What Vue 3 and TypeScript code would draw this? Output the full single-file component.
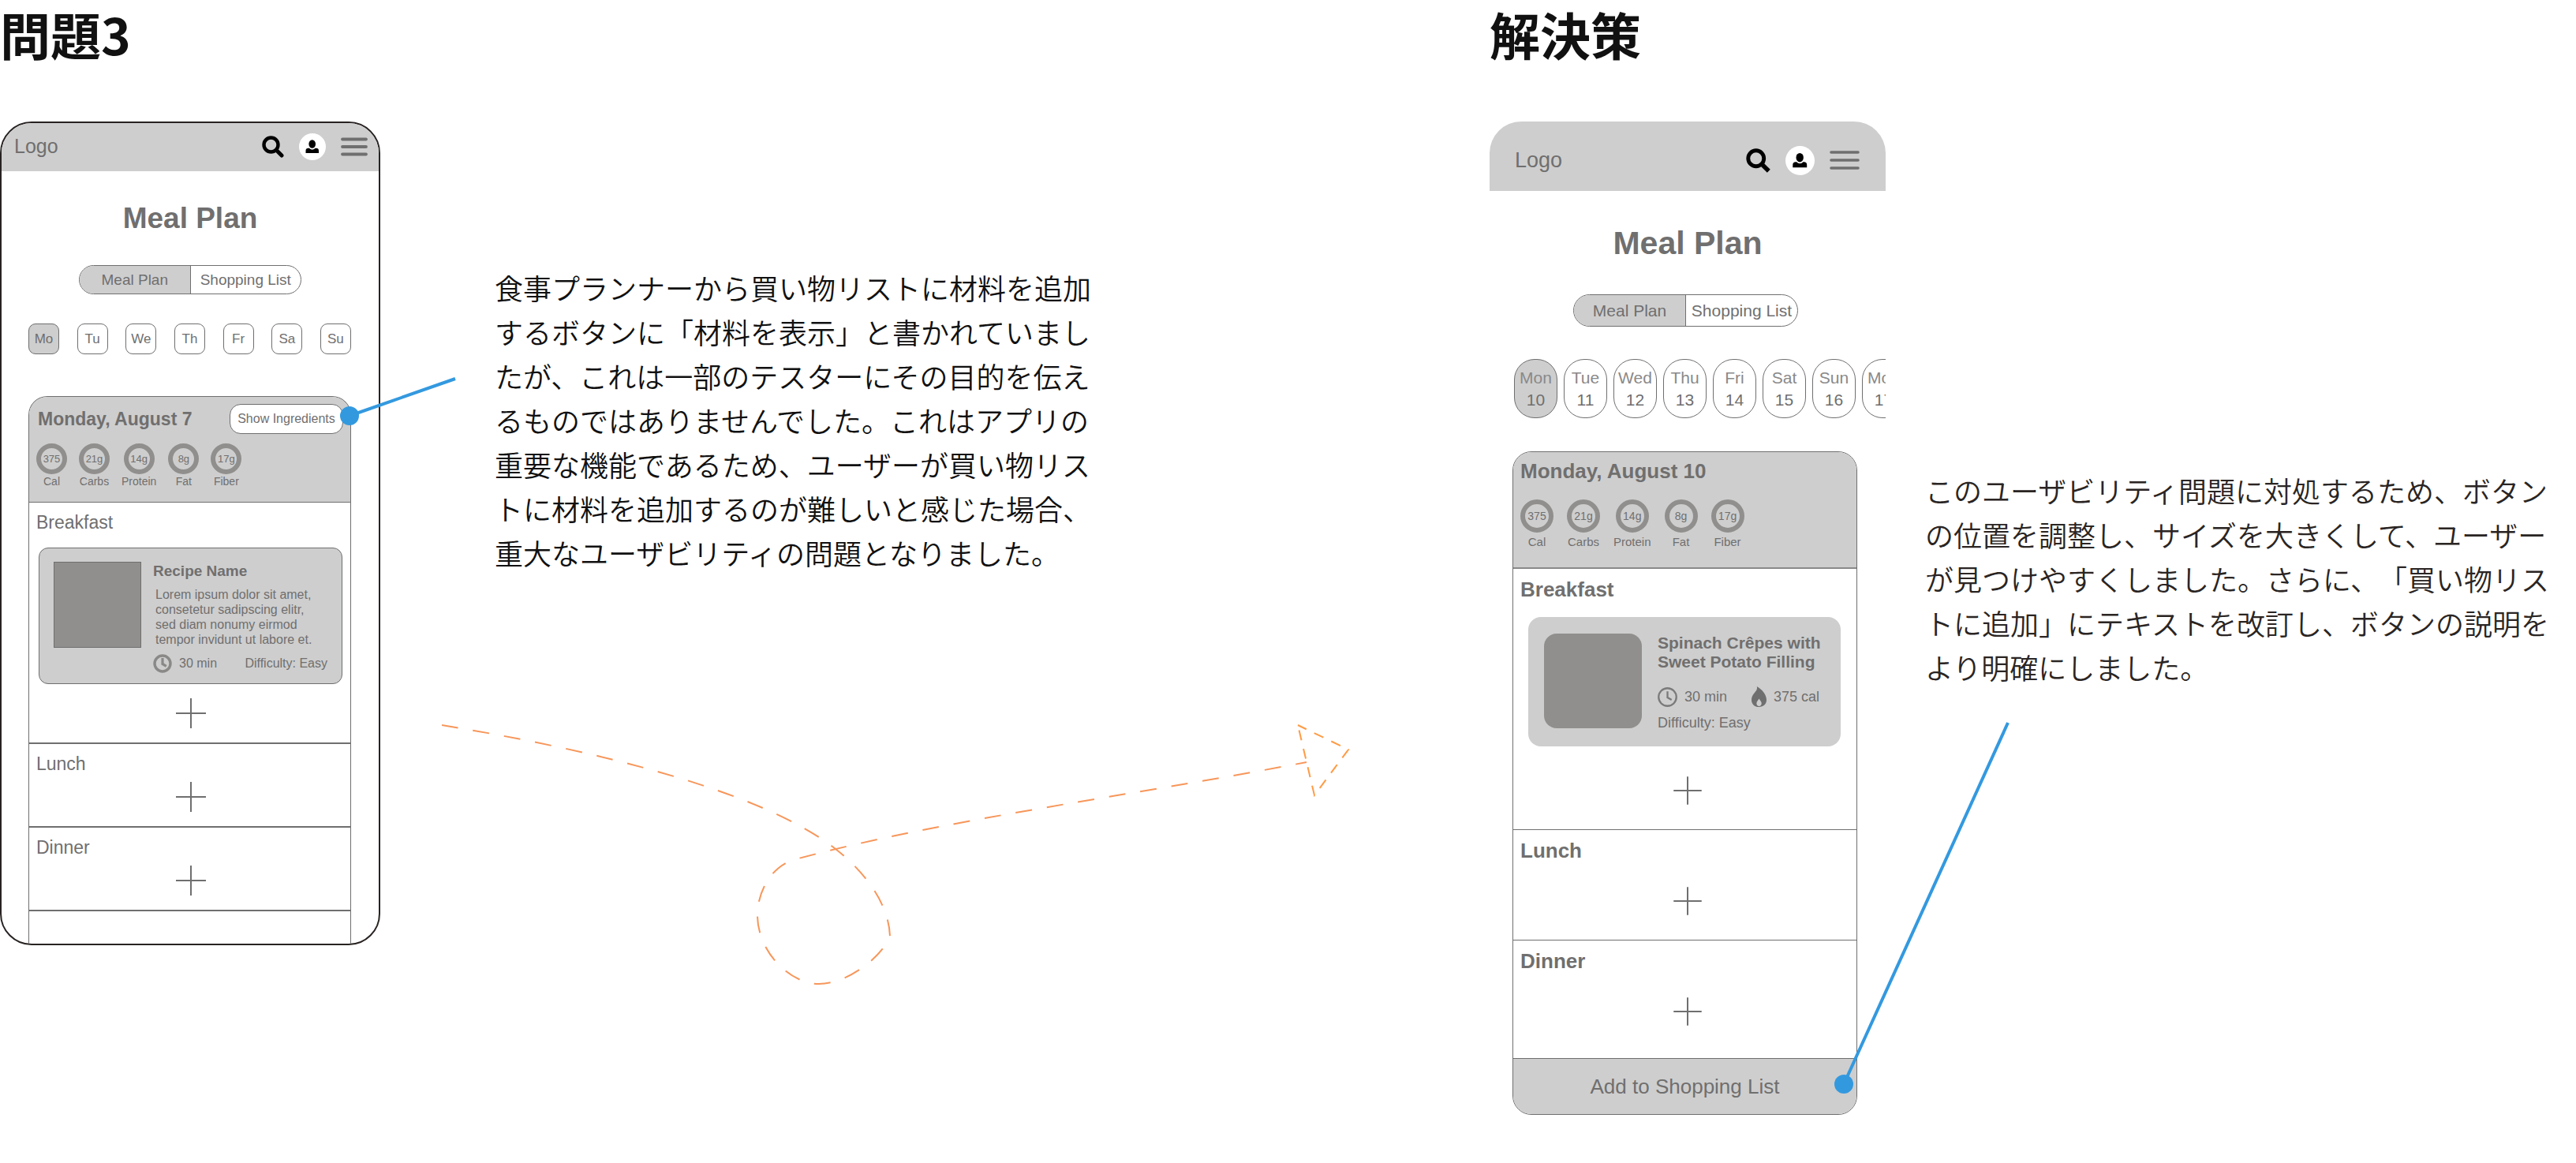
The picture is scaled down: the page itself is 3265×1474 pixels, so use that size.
<script setup lang="ts">
interface Nutrient {
  value: string
  label: string
}

interface Day {
  name: string
  date: number
}

const problemLines: string[] = [
  '食事プランナーから買い物リストに材料を追加',
  'するボタンに「材料を表示」と書かれていまし',
  'たが、これは一部のテスターにその目的を伝え',
  'るものではありませんでした。これはアプリの',
  '重要な機能であるため、ユーザーが買い物リス',
  'トに材料を追加するのが難しいと感じた場合、',
  '重大なユーザビリティの問題となりました。',
]

const solutionLines: string[] = [
  'このユーザビリティ問題に対処するため、ボタン',
  'の位置を調整し、サイズを大きくして、ユーザー',
  'が見つけやすくしました。さらに、「買い物リス',
  'トに追加」にテキストを改訂し、ボタンの説明を',
  'より明確にしました。',
]

const recipeLines: string[] = [
  'Lorem ipsum dolor sit amet,',
  'consetetur sadipscing elitr,',
  'sed diam nonumy eirmod',
  'tempor invidunt ut labore et.',
]

const weekdays: string[] = ['Mo', 'Tu', 'We', 'Th', 'Fr', 'Sa', 'Su']

const days: Day[] = [
  { name: 'Mon', date: 10 },
  { name: 'Tue', date: 11 },
  { name: 'Wed', date: 12 },
  { name: 'Thu', date: 13 },
  { name: 'Fri', date: 14 },
  { name: 'Sat', date: 15 },
  { name: 'Sun', date: 16 },
  { name: 'Mon', date: 17 },
]

const nutrients: Nutrient[] = [
  { value: '375', label: 'Cal' },
  { value: '21g', label: 'Carbs' },
  { value: '14g', label: 'Protein' },
  { value: '8g', label: 'Fat' },
  { value: '17g', label: 'Fiber' },
]
</script>

<template>
  <main class="page">
    <section class="column">
      <h2 class="heading">問題3</h2>
      <div class="stage">
        <div class="phone phone-before">
          <header class="bar">
            <span class="logo">Logo</span>
            <nav class="tools">
              <button class="tool tool-search" type="button" aria-label="Search">
                <svg viewBox="0 0 28 28"><circle cx="11.5" cy="11.5" r="9" fill="none" stroke="#000" stroke-width="4.4" /><path d="M18.5 18.5 25 25" stroke="#000" stroke-width="5" stroke-linecap="round" /></svg>
              </button>
              <button class="tool tool-user" type="button" aria-label="Account">
                <svg viewBox="0 0 34 34"><circle cx="17" cy="17" r="17" fill="#fff" /><ellipse cx="16.7" cy="13.5" rx="4.3" ry="5.3" /><path d="M8.5 25v-3c0-2.2 1.3-3.3 3.5-3.3h1c1 1.2 2.3 1.8 3.8 1.8s2.8-.6 3.800-1.800h1c2.200 0 3.400 1.100 3.400 3.300v3z" /></svg>
              </button>
              <button class="tool tool-menu" type="button" aria-label="Menu">
                <svg viewBox="0 0 34 24"><path d="M2 2.5h30M2 12h30M2 21.5h30" fill="none" stroke="#706f6f" stroke-width="3.8" stroke-linecap="round" /></svg>
              </button>
            </nav>
          </header>
          <h3 class="title">Meal Plan</h3>
          <div class="segments">
            <button class="segment active" type="button">Meal Plan</button>
            <button class="segment" type="button">Shopping List</button>
          </div>
          <div class="days">
            <button v-for="(day, i) in weekdays" :key="day" class="day" :class="{ active: i === 0 }" type="button">{{ day }}</button>
          </div>
          <article class="plan">
            <div class="summary">
              <div class="summary-row">
                <h4 class="date">Monday, August 7</h4>
                <button class="show" type="button">Show Ingredients</button>
              </div>
              <ul class="nutrients">
                <li v-for="n in nutrients" :key="n.label" class="nutrient">
                  <span class="ring">{{ n.value }}</span>
                  <span class="nutrient-label">{{ n.label }}</span>
                </li>
              </ul>
            </div>
            <div class="meal">
              <h5 class="meal-name">Breakfast</h5>
              <div class="recipe">
                <div class="photo"></div>
                <div class="info">
                  <h6 class="recipe-name">Recipe Name</h6>
                  <p class="description"><span v-for="line in recipeLines" :key="line" class="line">{{ line }}</span></p>
                  <div class="meta">
                    <span class="fact">
                      <svg class="clock" viewBox="0 0 24 24"><circle cx="12" cy="12" r="10" fill="none" stroke="#8a8988" stroke-width="3.4" /><path d="M12 5v7.5l4.8 2.8" fill="none" stroke="#8a8988" stroke-width="3.2" /></svg>
                      30 min
                    </span>
                    <span>Difficulty: Easy</span>
                  </div>
                </div>
              </div>
              <button class="add" type="button" aria-label="Add to breakfast"><svg viewBox="0 0 38 38"><path d="M19 0v38M0 19h38" stroke="#706f6f" stroke-width="2" /></svg></button>
            </div>
            <div v-for="meal in ['Lunch', 'Dinner']" :key="meal" class="meal">
              <h5 class="meal-name">{{ meal }}</h5>
              <button class="add" type="button" :aria-label="'Add to ' + meal"><svg viewBox="0 0 38 38"><path d="M19 0v38M0 19h38" stroke="#706f6f" stroke-width="2" /></svg></button>
            </div>
            <div class="meal-rest"></div>
          </article>
        </div>

        <svg class="pointer pointer-before" viewBox="0 0 148 64" aria-hidden="true">
          <path d="M12 50 146 3" stroke="#3399df" stroke-width="4" />
          <circle cx="12" cy="50" r="12" fill="#3399df" />
        </svg>

        <div class="side">
          <p class="note note-before"><span v-for="line in problemLines" :key="line" class="line">{{ line }}</span></p>
          <svg class="arrow" viewBox="560 910 1156 344" aria-hidden="true">
            <path d="M560 919C750 950 965 1002 1059 1076C1095 1104 1127 1145 1128 1187C1118 1212 1075 1247 1038 1247C1000 1247 960 1205 960 1160C960 1130 978 1095 1012 1088C1200 1038 1430 1009 1656 966" fill="none" stroke="#f7965a" stroke-width="2" stroke-dasharray="21 19" />
            <path d="M1645 919 1709 950 1666 1008Z" fill="none" stroke="#ff9b45" stroke-width="2" stroke-dasharray="13 11" stroke-dashoffset="1" />
          </svg>
        </div>
      </div>
    </section>

    <section class="column">
      <h2 class="heading">解決策</h2>
      <div class="stage">
        <div class="phone phone-after">
          <header class="bar">
            <span class="logo">Logo</span>
            <nav class="tools">
              <button class="tool tool-search" type="button" aria-label="Search">
                <svg viewBox="0 0 28 28"><circle cx="11.5" cy="11.5" r="9" fill="none" stroke="#000" stroke-width="4.4" /><path d="M18 18 26 26" stroke="#000" stroke-width="5" /></svg>
              </button>
              <button class="tool tool-user" type="button" aria-label="Account">
                <svg viewBox="0 0 34 34"><circle cx="17" cy="17" r="17" fill="#fff" /><ellipse cx="16.7" cy="13.5" rx="4.3" ry="5.3" /><path d="M8.5 25v-3c0-2.2 1.3-3.3 3.5-3.3h1c1 1.2 2.3 1.8 3.8 1.8s2.8-.6 3.800-1.800h1c2.200 0 3.400 1.100 3.400 3.300v3z" /></svg>
              </button>
              <button class="tool tool-menu" type="button" aria-label="Menu">
                <svg viewBox="0 0 38 24"><path d="M2 2h34M2 12h34M2 22h34" fill="none" stroke="#706f6f" stroke-width="3.6" stroke-linecap="round" /></svg>
              </button>
            </nav>
          </header>
          <h3 class="title">Meal Plan</h3>
          <div class="segments">
            <button class="segment active" type="button">Meal Plan</button>
            <button class="segment" type="button">Shopping List</button>
          </div>
          <div class="days">
            <button v-for="(day, i) in days" :key="day.date" class="day" :class="{ active: i === 0 }" type="button">
              <span class="day-name">{{ day.name }}</span>
              <span>{{ day.date }}</span>
            </button>
          </div>
          <article class="plan">
            <div class="summary">
              <h4 class="date">Monday, August 10</h4>
              <ul class="nutrients">
                <li v-for="n in nutrients" :key="n.label" class="nutrient">
                  <span class="ring">{{ n.value }}</span>
                  <span class="nutrient-label">{{ n.label }}</span>
                </li>
              </ul>
            </div>
            <div class="meal">
              <h5 class="meal-name">Breakfast</h5>
              <div class="recipe">
                <div class="photo"></div>
                <div class="info">
                  <h6 class="recipe-name"><span class="line">Spinach Crêpes with</span><span class="line">Sweet Potato Filling</span></h6>
                  <div class="meta">
                    <span class="fact">
                      <svg class="clock" viewBox="0 0 24 24"><circle cx="12" cy="12" r="10.8" fill="none" stroke="#7b7a7a" stroke-width="2.2" /><path d="M12 5v7.5l5 2.8" fill="none" stroke="#7b7a7a" stroke-width="2.2" /></svg>
                      30 min
                    </span>
                    <span class="fact">
                      <svg class="flame" viewBox="0 0 19 26"><path fill-rule="evenodd" d="M6.8 0C13 3.5 19 10 19 17c0 5.5-4 9-9.5 9S0 22.5 0 17.2C0 11.5 3.8 8.2 5.8 5.5 7 3.8 7.3 2 6.8 0ZM9.5 15.5c-1.2 2.3-3.1 3.6-3.1 6 0 2.2 1.3 3.5 3.1 3.5s3.2-1.3 3.2-3.5c0-2.4-2-3.7-3.2-6Z" fill="#706f6f" /></svg>
                      375 cal
                    </span>
                  </div>
                  <p class="difficulty">Difficulty: Easy</p>
                </div>
              </div>
              <button class="add" type="button" aria-label="Add to breakfast"><svg viewBox="0 0 36 36"><path d="M18 1v34M1 18h34" stroke="#706f6f" stroke-width="2" stroke-linecap="round" /></svg></button>
            </div>
            <div v-for="meal in ['Lunch', 'Dinner']" :key="meal" class="meal">
              <h5 class="meal-name">{{ meal }}</h5>
              <button class="add" type="button" :aria-label="'Add to ' + meal"><svg viewBox="0 0 36 36"><path d="M18 1v34M1 18h34" stroke="#706f6f" stroke-width="2" stroke-linecap="round" /></svg></button>
            </div>
            <button class="submit" type="button">Add to Shopping List</button>
          </article>
        </div>

        <svg class="pointer pointer-after" viewBox="0 0 224 472" aria-hidden="true">
          <path d="M12 460 220 2" stroke="#3399df" stroke-width="4" />
          <circle cx="12" cy="460" r="12" fill="#3399df" />
        </svg>

        <p class="note note-after"><span v-for="line in solutionLines" :key="line" class="line">{{ line }}</span></p>
      </div>
    </section>
  </main>
</template>

<style>
body {
  background: #fff;
}
</style>

<style scoped>
* {
  box-sizing: border-box;
}

.page {
  display: grid;
  grid-template-columns: 1888fr 1377fr;
  font-family: 'Liberation Sans', Arial, sans-serif;
  color: #706f6f;
}

.column {
  min-width: 0;
}

h2,
h3,
h4,
h5,
h6,
p,
ul {
  margin: 0;
  padding: 0;
}

button {
  margin: 0;
  padding: 0;
  border: 0;
  background: none;
  font: inherit;
  color: inherit;
}

svg {
  display: block;
}

.line {
  display: block;
  white-space: nowrap;
}

.heading {
  margin-bottom: 70px;
  font-family: 'Noto Sans CJK JP', sans-serif;
  font-size: 64px;
  font-weight: 700;
  line-height: 84px;
  color: #111;
}

.stage {
  position: relative;
  display: flex;
  align-items: flex-start;
}

.side {
  flex: 1;
  min-width: 0;
}

.note {
  font-family: 'Noto Sans CJK JP', sans-serif;
  font-size: 36px;
  font-weight: 350;
  line-height: 56px;
  text-spacing-trim: space-all;
}

.note-before {
  margin: 182px 0 0 145px;
  color: #111;
}

.note-after {
  margin: 439px 0 0 50px;
  color: #2a2523;
}

.arrow {
  width: 1156px;
  max-width: 100%;
  margin: 182px 0 0 78px;
}

.pointer {
  position: absolute;
}

.pointer-before {
  top: 323px;
  left: 431px;
  width: 148px;
}

.pointer-after {
  top: 760px;
  left: 437px;
  width: 224px;
}

/* Phone mock-ups: shared parts */
.phone {
  flex: none;
  overflow: hidden;
}

.bar {
  display: flex;
  align-items: center;
  justify-content: space-between;
  background: #cecece;
}

.tools {
  display: flex;
  align-items: center;
  gap: 19px;
}

.title {
  text-align: center;
}

.segments {
  display: flex;
  overflow: hidden;
  border: 1px solid #706f6f;
  border-radius: 21px;
}

.segment {
  flex: 1;
  white-space: nowrap;
}

.segment + .segment {
  border-left: 1px solid #706f6f;
}

.active {
  background: #cecece;
}

.days {
  display: flex;
}

.day {
  border: 1px solid #706f6f;
}

.plan {
  overflow: hidden;
  border: 1px solid #706f6f;
}

.summary {
  background: #cecece;
}

.nutrients {
  display: flex;
  list-style: none;
}

.nutrient {
  display: flex;
  flex-direction: column;
  align-items: center;
}

.ring {
  display: flex;
  align-items: center;
  justify-content: center;
  border: 6px solid #908f8d;
  border-radius: 50%;
}

.recipe {
  display: flex;
  background: #cecece;
}

.photo {
  flex: none;
  background: #908f8d;
}

.info {
  flex: 1;
}

.meta,
.fact {
  display: flex;
  align-items: center;
}

.fact {
  gap: 9px;
}

.add {
  display: block;
}

/* Original design */
.phone-before {
  width: 482px;
  border: 2px solid #282322;
  border-radius: 40px;
}

.phone-before .bar {
  height: 61px;
  padding: 0 14px 2px 16px;
}

.phone-before .logo {
  font-size: 25px;
}

.phone-before .tool-search {
  width: 28px;
}

.phone-before .tool-user,
.phone-before .tool-menu {
  width: 34px;
}

.phone-before .title {
  margin-top: 38px;
  font-size: 37px;
  line-height: 44px;
}

.phone-before .segments {
  height: 37px;
  margin: 37px 98px;
  font-size: 19px;
}

.phone-before .days {
  justify-content: space-between;
  margin: 0 35px 0 34px;
}

.phone-before .day {
  width: 39px;
  height: 39px;
  border-radius: 9px;
  font-size: 17px;
}

.phone-before .plan {
  margin: 53px 35px 0 34px;
  border-bottom: 0;
  border-radius: 24px 24px 0 0;
}

.phone-before .summary {
  padding: 9px 9px 18px;
  border-bottom: 1px solid #706f6f;
}

.summary-row {
  display: flex;
  align-items: center;
  justify-content: space-between;
}

.phone-before .date {
  padding-left: 2px;
  font-size: 23px;
  line-height: 28px;
}

.show {
  width: 144px;
  height: 38px;
  border: 1px solid #706f6f;
  border-radius: 14px;
  background: #fff;
  font-size: 16px;
}

.phone-before .nutrients {
  gap: 15px;
  margin-top: 12px;
}

.phone-before .ring {
  width: 39px;
  height: 39px;
  font-size: 13px;
}

.phone-before .nutrient-label {
  margin-top: 1px;
  font-size: 14px;
  line-height: 16px;
}

.phone-before .meal {
  padding: 10px 10px 18px 12px;
  border-bottom: 2px solid #706f6f;
}

.phone-before .meal-name {
  margin-left: -3px;
  font-size: 23px;
  font-weight: 400;
  line-height: 30px;
}

.phone-before .recipe {
  gap: 15px;
  margin: 17px 0 18px;
  padding: 17px 18px 13px;
  border: 1px solid #706f6f;
  border-radius: 12px;
}

.phone-before .photo {
  width: 111px;
  height: 109px;
  border: 1px solid #706f6f;
}

.phone-before .recipe-name {
  font-size: 19px;
  line-height: 24px;
}

.phone-before .description {
  margin-top: 8px;
  padding-left: 3px;
  font-size: 16px;
  line-height: 19px;
}

.phone-before .meta {
  justify-content: space-between;
  height: 24px;
  margin-top: 9px;
  font-size: 16px;
}

.phone-before .clock {
  width: 24px;
}

.phone-before .add {
  width: 38px;
  margin: 8px auto 0;
}

.meal-rest {
  height: 41px;
}

/* Revised design */
.phone-after {
  width: 502px;
  border-radius: 40px 40px 0 0;
}

.phone-after .bar {
  height: 88px;
  padding: 10px 33px 0 32px;
}

.phone-after .logo {
  font-size: 27px;
}

.phone-after .tool-search {
  width: 31px;
}

.phone-after .tool-user {
  width: 37px;
}

.phone-after .tool-menu {
  width: 38px;
}

.phone-after .title {
  margin-top: 42px;
  font-size: 41px;
  line-height: 48px;
}

.phone-after .segments {
  width: 285px;
  height: 41px;
  margin: 41px 0 41px 106px;
  font-size: 21px;
}

.phone-after .days {
  gap: 8px;
  padding-left: 31px;
}

.phone-after .day {
  display: flex;
  flex: none;
  flex-direction: column;
  align-items: center;
  justify-content: center;
  width: 55px;
  height: 75px;
  border-radius: 26px;
  font-size: 21px;
  line-height: 28px;
}

.day-name {
  color: #8a8989;
}

.phone-after .plan {
  margin: 42px 36px 0 29px;
  border-radius: 24px;
}

.phone-after .summary {
  padding: 8px 9px 23px;
  border-bottom: 2px solid #8a8989;
}

.phone-after .date,
.phone-after .meal-name {
  font-size: 26px;
  line-height: 32px;
}

.phone-after .nutrients {
  gap: 17px;
  margin-top: 20px;
}

.phone-after .ring {
  width: 42px;
  height: 42px;
  font-size: 14px;
}

.phone-after .nutrient-label {
  margin-top: 3px;
  font-size: 15px;
  line-height: 18px;
}

.phone-after .meal {
  padding: 10px 2px 31px 9px;
  border-bottom: 1px solid #706f6f;
}

.phone-after .meal:nth-of-type(4) {
  padding-bottom: 41px;
}

.phone-after .recipe {
  gap: 20px;
  margin: 19px 18px 38px 10px;
  padding: 21px 20px 17px;
  border-radius: 16px;
}

.phone-after .photo {
  width: 124px;
  height: 120px;
  border-radius: 16px;
}

.phone-after .recipe-name {
  font-size: 21px;
  line-height: 24px;
}

.phone-after .meta {
  gap: 31px;
  height: 26px;
  margin: 19px 0 7px;
  font-size: 18px;
}

.phone-after .clock {
  width: 25px;
}

.flame {
  width: 19px;
}

.difficulty {
  font-size: 18px;
  line-height: 26px;
}

.phone-after .add {
  width: 36px;
  margin: 30px auto 0;
}

.phone-after .recipe + .add {
  margin-top: 0;
}

.submit {
  display: block;
  width: 100%;
  height: 70px;
  background: #cecece;
  font-size: 26px;
}
</style>
